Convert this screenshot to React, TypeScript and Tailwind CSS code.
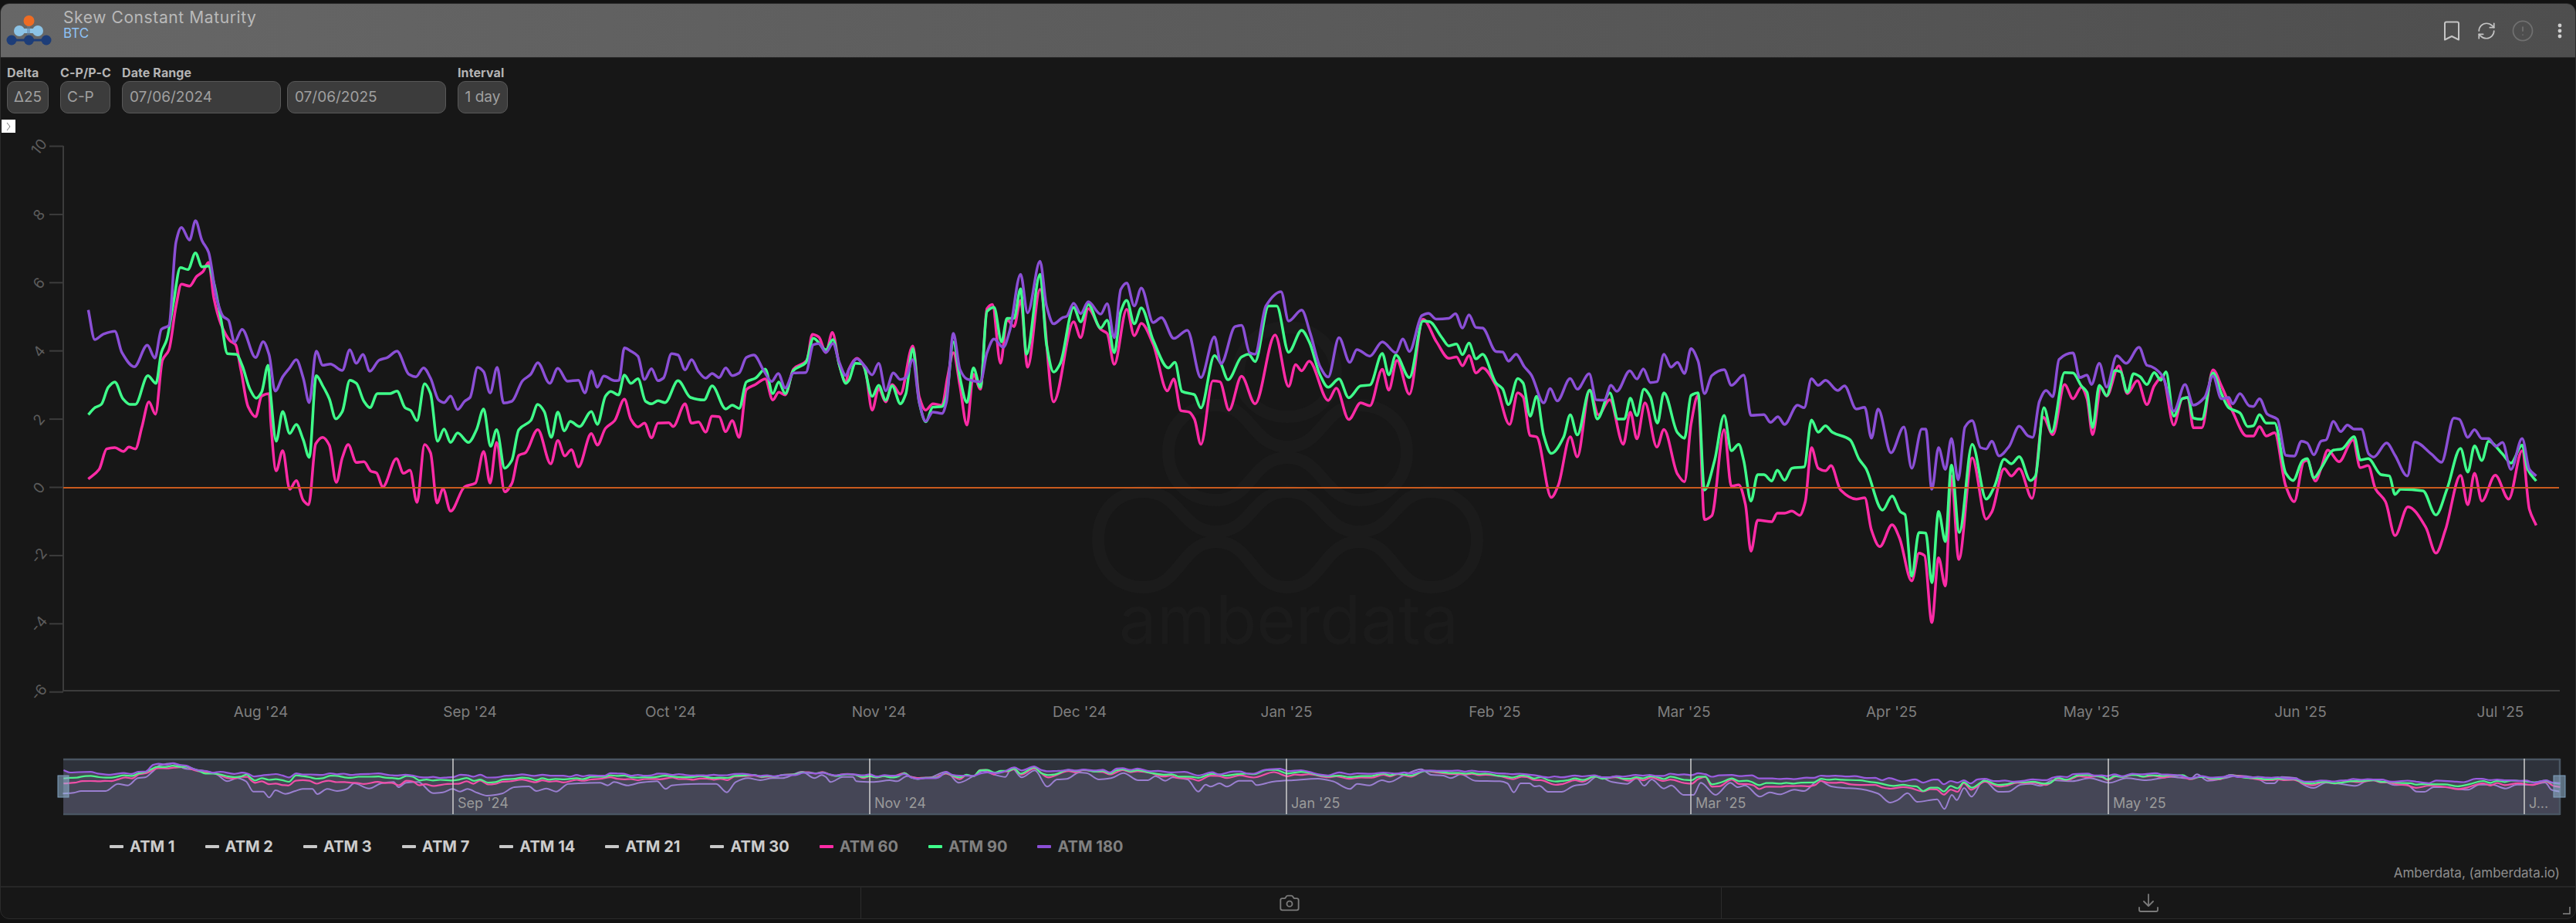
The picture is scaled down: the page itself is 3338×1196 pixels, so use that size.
import React from "react";
import { RefreshCw, CircleAlert, Camera } from "lucide-react";

type P = [number, number];

const Z5 = { x0: 0, sx: 1.425, y0: 180, sy: 3 };
const Z6 = { x0: 1100, sx: 1.425, y0: 300, sy: 2.8 };
const Z7 = { x0: 2200, sx: 1.378, y0: 400, sy: 3 };

const conv = (a: number[], z: { x0: number; sx: number; y0: number; sy: number }): P[] => {
  const out: P[] = [];
  for (let i = 0; i < a.length; i += 2) out.push([z.x0 + a[i] / z.sx, z.y0 + a[i + 1] / z.sy]);
  return out;
};

const join = (...parts: P[][]): P[] => {
  const out: P[] = [];
  parts.flat().forEach((p) => {
    if (!out.length || p[0] > out[out.length - 1][0] + 0.01) out.push(p);
  });
  return out;
};

const purple = join(
  conv([163,665,175,780,190,760,212,748,225,830,248,886,272,802,286,852,298,740,312,725,325,400,335,344,350,393,361,318,373,395,385,440,400,620,412,690,422,705,433,790,447,740,472,850,486,788,497,840,508,980,522,925,535,890,547,858,560,930,571,1025,584,825,596,880,610,875,632,900,646,820,658,872,670,838,683,903,700,860,715,850,733,825,755,915,768,925,782,890,795,930,810,1015,820,1025,832,1000,845,1052,858,1020,868,1005,882,888,893,905,905,988,918,888,930,1027,945,1020,965,940,980,915,993,870,1015,950,1030,892,1048,942,1068,938,1080,988,1092,902,1103,965,1115,922,1135,940,1143,938,1153,812,1165,825,1178,845,1190,935,1203,893,1215,940,1225,930,1240,835,1252,840,1265,898,1277,858,1290,905,1303,930,1315,912,1328,928,1340,890,1352,920,1365,910,1378,850,1392,840,1410,900,1425,943,1437,912,1450,968,1465,910,1488,908,1502,800,1512,796,1525,830,1538,795,1550,870,1562,920], Z5),
  conv([0,500,15,462,30,490,43,520,55,478,68,578,82,513,95,537,105,530,118,465,130,620,142,688,155,655,172,660,180,620,193,370,205,500,218,535,243,545,255,440,268,390,285,420,297,360,317,155,330,295,353,108,365,270,378,335,395,312,402,308,415,260,428,298,442,255,465,300,477,262,490,385,502,210,513,187,527,270,540,205,562,330,577,312,600,388,625,358,650,530,675,382,687,480,713,345,725,340,740,440,750,445,770,270,798,218,812,325,836,285,852,370,870,490,885,528,905,385,925,475,938,428,962,452,985,400,1010,440,1023,390,1035,435,1058,305,1070,297,1085,318,1108,315,1120,298,1133,350,1145,302,1158,348,1170,350,1195,435,1207,437,1218,470,1232,445,1247,490,1260,520,1283,622,1295,570,1308,615,1332,533,1345,572,1367,516,1380,610,1395,612,1407,558,1418,580,1442,505,1455,535,1467,498,1480,548,1492,545,1505,445,1518,492,1530,475,1543,515,1555,425,1568,470], Z6),
  conv([0,205,12,330,25,260,47,237,60,298,82,258,95,415,118,412,130,442,143,420,155,450,178,375,190,385,203,272,215,298,228,278,250,318,262,300,283,390,298,383,310,503,322,390,345,560,368,460,382,620,400,468,407,468,418,702,430,540,442,625,453,505,465,665,477,460,490,435,505,540,515,545,525,515,538,572,556,535,574,457,590,495,598,500,610,360,622,318,634,342,645,197,670,172,682,268,695,258,703,295,717,212,730,305,748,183,765,212,788,150,802,220,810,225,830,262,850,398,870,295,885,375,905,345,920,262,935,350,948,345,955,370,968,330,985,378,992,380,1003,350,1017,410,1035,430,1050,570,1065,573,1078,515,1088,522,1100,568,1113,515,1122,510,1135,438,1148,478,1160,452,1172,468,1185,468,1198,565,1207,577,1230,522,1245,570,1267,650,1280,518,1310,565,1328,597,1350,425,1360,430,1375,500,1387,470,1400,505,1412,505,1425,535,1437,520,1452,625,1472,505,1485,625,1497,650], Z7)
);

const green = join(
  conv([163,1072,175,1045,187,1032,200,965,212,945,227,1010,240,1032,250,1032,273,920,288,950,298,830,308,780,320,640,333,500,347,508,361,443,373,497,385,494,395,560,408,700,420,835,437,838,447,880,462,975,473,1008,483,985,495,880,500,1000,510,1175,522,1060,535,1145,547,1110,560,1170,571,1238,584,920,596,960,608,1010,620,1088,632,1060,646,938,658,950,672,1020,683,1045,697,990,720,990,733,980,748,1045,758,1055,770,1095,784,952,795,990,808,1175,820,1128,832,1180,845,1143,865,1180,880,1130,893,1050,906,1195,917,1130,932,1280,945,1250,958,1130,980,1095,993,1032,1005,1060,1018,1160,1030,1062,1042,1135,1053,1098,1070,1118,1092,1060,1103,1110,1118,1000,1128,982,1142,995,1153,918,1165,950,1178,932,1192,1020,1203,1030,1215,1018,1228,1025,1252,940,1275,1005,1300,1015,1315,960,1340,1050,1352,1035,1365,1048,1378,945,1395,930,1413,895,1427,990,1438,945,1450,990,1465,900,1488,870,1502,775,1525,820,1538,780,1550,880,1562,950], Z5),
  conv([0,540,12,478,25,480,43,598,55,558,68,612,80,560,95,625,105,590,118,425,130,620,142,690,155,637,172,635,180,600,193,400,205,530,218,620,230,495,243,565,255,290,268,275,282,400,292,315,305,315,317,208,328,445,353,155,365,410,378,510,390,480,415,275,428,328,442,265,465,350,477,322,490,440,502,290,513,250,527,335,540,277,562,395,590,495,602,475,615,580,638,592,650,640,675,450,687,480,700,538,725,455,738,445,750,472,775,270,790,270,812,438,836,358,850,400,870,520,885,565,905,535,923,603,945,560,962,557,985,442,997,520,1010,448,1035,530,1060,325,1072,327,1095,385,1108,415,1122,408,1133,447,1145,405,1158,462,1170,445,1195,550,1207,570,1218,628,1235,533,1245,550,1258,670,1270,598,1283,740,1297,805,1320,745,1332,665,1345,738,1368,575,1382,680,1405,585,1420,680,1432,680,1443,605,1455,668,1468,572,1480,600,1493,695,1505,585,1530,730,1543,750,1555,595,1568,585], Z6),
  conv([0,330,12,705,30,590,47,415,60,552,73,527,82,590,95,748,107,645,118,645,132,670,142,628,155,667,168,620,190,615,203,433,215,480,228,455,240,480,272,510,288,585,300,620,330,783,347,728,362,790,370,800,382,1040,395,870,407,872,418,1065,430,788,442,905,453,608,467,870,490,527,515,740,530,690,547,585,560,603,574,575,594,668,603,650,618,385,632,480,655,248,670,250,685,300,695,325,705,462,717,298,730,338,745,240,755,245,767,325,778,253,790,265,802,295,815,248,827,278,836,245,850,418,865,350,875,345,885,425,900,430,920,250,935,330,948,385,968,405,982,458,992,455,1003,412,1015,445,1030,445,1050,640,1063,668,1080,590,1088,583,1100,658,1113,620,1135,550,1150,545,1172,497,1183,588,1197,583,1220,645,1235,650,1245,722,1255,702,1295,708,1318,802,1338,700,1362,543,1375,635,1387,533,1400,590,1412,515,1437,565,1452,600,1472,530,1482,625,1497,670], Z7)
);

const pink = join(
  conv([163,1322,183,1285,197,1205,212,1200,228,1215,238,1198,250,1205,262,1120,275,1022,287,1070,300,860,312,820,325,650,335,565,350,572,363,535,375,515,385,480,395,620,408,720,425,785,435,800,445,900,458,1040,472,1080,483,1000,497,990,500,1100,510,1290,522,1212,535,1362,547,1328,560,1405,570,1422,583,1185,596,1160,608,1190,621,1335,632,1240,643,1188,658,1258,672,1255,685,1292,695,1298,707,1352,732,1243,745,1300,757,1288,770,1413,784,1188,795,1220,807,1415,818,1360,832,1447,858,1352,878,1338,893,1215,905,1338,917,1180,932,1372,945,1340,958,1230,970,1220,993,1130,1017,1263,1030,1172,1043,1232,1055,1208,1068,1275,1092,1145,1103,1190,1118,1125,1135,1095,1153,1012,1165,1090,1178,1120,1190,1105,1203,1162,1215,1105,1235,1103,1243,1118,1265,1030,1277,1105,1290,1100,1303,1140,1315,1078,1328,1080,1340,1138,1352,1095,1365,1160,1378,975,1395,955,1413,933,1427,1015,1438,985,1450,995,1465,895,1490,860,1500,760,1512,770,1525,830,1537,752,1550,880,1562,945], Z5),
  conv([0,500,15,460,30,500,43,648,55,570,68,618,80,555,95,590,118,415,130,600,142,648,155,625,172,630,182,530,193,440,205,560,218,702,230,518,243,572,255,280,265,265,280,478,292,320,305,345,317,250,330,492,353,210,378,618,415,328,428,385,442,280,465,355,477,370,490,482,513,282,527,378,540,333,562,410,588,578,600,535,613,650,628,655,638,680,650,772,672,542,685,545,702,648,725,525,750,625,787,375,812,562,825,483,836,505,850,470,885,613,900,568,923,682,945,622,962,632,985,500,997,575,1012,468,1035,590,1060,318,1085,400,1108,460,1122,455,1133,487,1145,450,1158,513,1170,495,1195,560,1220,700,1235,585,1245,600,1258,740,1270,745,1297,965,1310,920,1332,745,1345,818,1368,575,1384,665,1405,610,1430,772,1443,655,1455,752,1470,622,1492,782,1505,718,1530,880,1543,908,1555,700,1568,595], Z6),
  conv([0,575,12,820,25,805,47,470,60,690,73,685,85,760,95,943,107,822,132,828,142,795,155,795,168,787,182,803,192,750,203,540,215,620,228,630,238,610,255,705,283,740,298,735,310,860,325,925,347,840,360,890,382,1058,395,950,405,960,418,1220,430,968,442,1078,453,650,466,975,490,580,515,818,525,790,547,622,560,650,574,622,597,737,617,422,634,490,655,295,670,350,685,305,695,350,705,490,720,305,730,340,752,222,767,330,785,280,802,373,815,300,830,265,850,452,865,350,875,345,885,463,900,463,920,238,935,300,955,400,980,495,992,495,1003,458,1015,495,1030,482,1050,690,1065,750,1082,595,1088,590,1103,670,1113,620,1125,550,1145,595,1170,510,1183,618,1197,610,1210,700,1228,750,1245,882,1268,770,1300,850,1318,950,1335,860,1362,648,1375,762,1387,640,1400,748,1424,647,1448,740,1472,552,1485,780,1497,842], Z7)
);

const pale = join(
  conv([18,160,40,157,55,150,105,150,130,122,150,128,170,100,185,97,200,75,215,50,240,42,265,62,300,70,330,85,352,112,372,100,390,112,405,152,425,152,437,175,450,147,470,161,490,150,505,142,525,142,535,162,555,142,575,150,595,142,610,120,640,140,665,120,690,115,700,135,715,118,740,115,770,158,790,155,810,142,825,152,840,142,860,157,880,168,910,160,935,135,965,132,980,150,1000,140,1020,152,1045,122,1110,118,1125,128,1138,115,1165,128,1190,118,1225,112,1243,142,1255,128,1310,122,1345,122,1367,155,1385,115,1410,100,1435,108,1460,100,1480,100,1520,75,1545,100,1560,88], { x0: 70, sx: 1.568, y0: 975, sy: 3 }),
  conv([0,95,10,115,35,95,55,95,62,112,95,115,130,108,145,112,165,92,190,100,210,98,245,75,270,118,300,92,320,72,340,85,365,95,378,60,398,97,425,70,450,133,470,105,490,103,515,78,530,80,555,105,580,100,605,80,635,108,655,108,670,92,690,110,705,97,735,105,757,152,772,125,782,133,800,120,815,133,840,110,865,110,875,127,910,113,950,108,1000,102,1030,112,1065,142,1080,122,1105,128,1130,108,1145,115,1175,88,1210,65,1230,87,1255,90,1270,100,1290,85,1320,110,1370,112,1385,120,1398,155,1412,120,1430,120,1440,132,1450,130,1468,153,1495,153,1520,130,1545,122], { x0: 1070, sx: 1.568, y0: 975, sy: 3 }),
  conv([0,92,30,115,60,122,80,100,95,130,110,105,135,140,150,128,175,165,195,165,210,118,240,165,270,118,285,135,300,128,330,172,350,155,370,163,400,145,420,150,450,108,475,132,500,138,525,140,570,160,595,195,610,185,630,158,650,192,690,182,705,220,720,165,730,185,745,138,760,172,785,108,815,153,835,152,860,125,880,122,900,130,925,108,965,112,1000,100,1040,118,1075,100,1115,108,1165,95,1205,102,1218,85,1240,110,1275,100,1300,90,1340,100,1360,120,1375,120,1390,95,1420,100,1430,120,1455,138,1480,118,1510,122,1540,130], { x0: 2070, sx: 1.568, y0: 975, sy: 3 }),
  conv([910,152,960,160,990,172,1030,170,1060,197,1085,198,1115,180,1150,180,1200,188,1225,190,1260,170,1300,170,1345,185,1380,170,1430,170,1470,162,1490,190,1515,197], { x0: 2700, sx: 2.458, y0: 960, sy: 3 })
);

const monotone = (pts: P[]): string => {
  const n = pts.length;
  const dx: number[] = [];
  const m: number[] = [];
  for (let i = 0; i < n - 1; i++) {
    dx[i] = pts[i + 1][0] - pts[i][0];
    m[i] = (pts[i + 1][1] - pts[i][1]) / dx[i];
  }
  const t: number[] = [m[0]];
  for (let i = 1; i < n - 1; i++) {
    if (m[i - 1] * m[i] <= 0) t[i] = 0;
    else {
      const w = dx[i - 1] + dx[i];
      t[i] = (3 * w) / ((w + dx[i]) / m[i - 1] + (w + dx[i - 1]) / m[i]);
    }
  }
  t[n - 1] = m[n - 2];
  let d = `M${pts[0][0].toFixed(1)},${pts[0][1].toFixed(1)}`;
  for (let i = 0; i < n - 1; i++) {
    const h = dx[i] / 3;
    d += `C${(pts[i][0] + h).toFixed(1)},${(pts[i][1] + t[i] * h).toFixed(1)} ${(pts[i + 1][0] - h).toFixed(1)},${(pts[i + 1][1] - t[i + 1] * h).toFixed(1)} ${pts[i + 1][0].toFixed(1)},${pts[i + 1][1].toFixed(1)}`;
  }
  return d;
};

const toNav = (pts: P[]): P[] =>
  pts.map(([x, y]) => [82 + ((x - 114) * (3317 - 82)) / (3286 - 114), 1016 - (631.5 - y) * 0.0783] as P);

const navPurple = toNav(purple);
const areaPath = `${monotone(navPurple)}L3317,1056L82,1056Z`;

const yTicks = [10, 8, 6, 4, 2, 0, -2, -4, -6];
const tickY = (v: number) => 631.5 - v * 44.2;
const months: [string, number][] = [
  ["Aug '24", 338], ["Sep '24", 609], ["Oct '24", 869], ["Nov '24", 1139], ["Dec '24", 1399], ["Jan '25", 1667],
  ["Feb '25", 1937], ["Mar '25", 2182], ["Apr '25", 2451], ["May '25", 2710], ["Jun '25", 2981], ["Jul '25", 3240],
];
const navTicks: [string, number][] = [
  ["Sep '24", 587], ["Nov '24", 1127], ["Jan '25", 1667], ["Mar '25", 2191], ["May '25", 2732], ["J...", 3271],
];
const legend: [string, string, string][] = [
  ["ATM 1", "bg-[#c8c8c8]", "text-[#cccccc]"],
  ["ATM 2", "bg-[#c8c8c8]", "text-[#cccccc]"],
  ["ATM 3", "bg-[#c8c8c8]", "text-[#cccccc]"],
  ["ATM 7", "bg-[#c8c8c8]", "text-[#cccccc]"],
  ["ATM 14", "bg-[#c8c8c8]", "text-[#cccccc]"],
  ["ATM 21", "bg-[#c8c8c8]", "text-[#cccccc]"],
  ["ATM 30", "bg-[#c8c8c8]", "text-[#cccccc]"],
  ["ATM 60", "bg-[#ff2ba6]", "text-[#808080]"],
  ["ATM 90", "bg-[#3fff8a]", "text-[#808080]"],
  ["ATM 180", "bg-[#8b4fd6]", "text-[#808080]"],
];

const Field = ({ children, w, cls = "" }: { children: React.ReactNode; w: string; cls?: string }) => (
  <div className={`flex h-[42px] items-center rounded-[10px] border border-[#585858] bg-[#3c3c3c] text-[19px] text-[#a0a0a0] ${w} ${cls}`}>
    {children}
  </div>
);

const Label = ({ children }: { children: React.ReactNode }) => (
  <div className="h-[18px] whitespace-nowrap text-[16px] font-bold leading-[15px] tracking-[0.1px] text-[#b4b4b4]">{children}</div>
);

export default function App() {
  return (
    <div className="h-[1196px] w-[3338px] overflow-hidden bg-[#121212] pb-[5px] pt-[4px] font-[Inter,sans-serif]">
      <div className="flex h-full flex-col overflow-hidden rounded-[12px] border border-[#2b2b2b] bg-[#171717]">
        <header className="flex h-[70px] shrink-0 items-center border-b border-[#2a2a2a] bg-gradient-to-r from-[#676767] to-[#4e4e4e] pl-[7px] pr-[17px]">
          <svg width="60" height="42" viewBox="8 19 60 42" className="shrink-0">
            <path d="M25 40H49" stroke="#8cc3e6" strokeWidth="6" />
            <path d="M15 52H60" stroke="#1d3d78" strokeWidth="3" />
            <path d="M37 27L37 50" stroke="#5f7f9f" strokeWidth="4" opacity="0.5" />
            <circle cx="15" cy="52" r="6.5" fill="#1d3d78" />
            <circle cx="37.5" cy="52" r="6.5" fill="#1d3d78" />
            <circle cx="60" cy="52" r="6.5" fill="#1d3d78" />
            <circle cx="25" cy="40" r="7" fill="#8cc3e6" />
            <circle cx="49" cy="40" r="7" fill="#8cc3e6" />
            <circle cx="37.5" cy="27" r="7" fill="#ee6c24" />
          </svg>
          <div className="mb-[17px] ml-[14px] flex flex-col">
            <div className="text-[21px] leading-[24px] tracking-[0.6px] text-[#b9b9b9]">Skew Constant Maturity</div>
            <div className="text-[17px] leading-[16px] text-[#8ec2f5]">BTC</div>
          </div>
          <div className="ml-auto flex items-center">
            <svg width="20" height="26" viewBox="0 0 20 26" fill="none" stroke="#c4c4c4" strokeWidth="2" strokeLinejoin="round">
              <path d="M1 3.5C1 2.5 2 1.5 3 1.5H17C18 1.5 19 2.5 19 3.5V24.5L10 20L1 24.5Z" />
            </svg>
            <RefreshCw className="ml-[22px] h-[26px] w-[26px] text-[#c4c4c4]" strokeWidth={1.6} />
            <CircleAlert className="ml-[19px] h-[30px] w-[30px] text-[#707070]" strokeWidth={1.4} />
            <svg width="6" height="20" viewBox="0 0 6 20" className="ml-[30px]" fill="#cfcfcf">
              <circle cx="3" cy="3" r="2.4" />
              <circle cx="3" cy="10" r="2.4" />
              <circle cx="3" cy="17" r="2.4" />
            </svg>
          </div>
        </header>

        <div className="flex shrink-0 gap-[15px] pl-[8px] pt-[12px]">
          <div className="w-[54px]">
            <Label>Delta</Label>
            <Field w="w-[54px]" cls="justify-center">Δ25</Field>
          </div>
          <div className="w-[65px]">
            <Label>C-P/P-C</Label>
            <Field w="w-[65px]" cls="pl-[8px]">C-P</Field>
          </div>
          <div className="w-[420px]">
            <Label>Date Range</Label>
            <div className="flex gap-[8px]">
              <Field w="w-[206px]" cls="pl-[9px]">07/06/2024</Field>
              <Field w="w-[206px]" cls="pl-[9px]">07/06/2025</Field>
            </div>
          </div>
          <div className="w-[65px]">
            <Label>Interval</Label>
            <Field w="w-[65px]" cls="justify-center">1 day</Field>
          </div>
        </div>

        <button className="ml-[1px] mt-[8px] flex h-[17px] w-[18px] shrink-0 items-center justify-center bg-white">
          <svg width="8" height="12" viewBox="0 0 8 12" fill="none" stroke="#777" strokeWidth="1">
            <path d="M2 1L6 6L2 11" />
          </svg>
        </button>

        <svg width="3336" height="888" viewBox="1 178 3336 888" className="mt-[6px] block shrink-0">
          <g fill="none" stroke="#1b1b1b" strokeWidth="16">
            <ellipse cx="1668" cy="482" rx="63" ry="58" />
            <path d="M1514,586C1514,550 1540,525 1576,525C1622,525 1622,579 1668,579C1714,579 1714,525 1761,525C1797,525 1823,550 1823,586C1823,622 1797,648 1761,648C1714,648 1714,593 1668,593C1622,593 1622,648 1576,648C1540,648 1514,622 1514,586Z" />
            <path d="M1423,699C1423,660 1450,637 1482,637C1530,637 1530,689 1576,689C1622,689 1622,637 1668,637C1714,637 1714,689 1761,689C1807,689 1807,637 1854,637C1886,637 1914,660 1914,699C1914,738 1886,761 1854,761C1807,761 1807,702 1761,702C1714,702 1714,761 1668,761C1622,761 1622,702 1576,702C1530,702 1530,761 1482,761C1450,761 1423,738 1423,699Z" />
          </g>
          <text x="1670" y="834" textAnchor="middle" fontSize="87" fill="#1b1b1b" fontFamily="Inter, sans-serif">amberdata</text>

          <path d="M82,189V895H3317" fill="none" stroke="#3c3c3c" strokeWidth="2" />
          {yTicks.map((v) => (
            <g key={v}>
              <line x1="64" x2="82" y1={tickY(v)} y2={tickY(v)} stroke="#3c3c3c" strokeWidth="2" />
              <text
                x="51"
                y={tickY(v) + 7}
                textAnchor="middle"
                fontSize="19"
                fill="#5c5c5c"
                fontFamily="Inter, sans-serif"
                transform={`rotate(-50 51 ${tickY(v) + 1})`}
              >
                {String(v)}
              </text>
            </g>
          ))}
          {months.map(([m, x]) => (
            <text key={m} x={x} y="929" textAnchor="middle" fontSize="19" fill="#7e7e7e" fontFamily="Inter, sans-serif">
              {m}
            </text>
          ))}

          <path d={monotone(pink)} fill="none" stroke="#ff2ba6" strokeWidth="3.5" strokeLinejoin="round" />
          <path d={monotone(green)} fill="none" stroke="#3fff8a" strokeWidth="3.5" strokeLinejoin="round" />
          <path d={monotone(purple)} fill="none" stroke="#8b4fd6" strokeWidth="3.5" strokeLinejoin="round" />
          <line x1="82" x2="3316" y1="632" y2="632" stroke="#c95a1e" strokeWidth="2.2" />

          <rect x="82" y="983" width="3235" height="73" fill="#2e323b" />
          <path d={areaPath} fill="#454656" />
          <path d="M82,984H3317M82,1055H3317M3317,983V1056" fill="none" stroke="#4a5662" strokeWidth="2.5" />
          <path d={monotone(pale)} fill="none" stroke="#9a7fd0" strokeWidth="2" />
          <path d={monotone(toNav(pink))} fill="none" stroke="#f04fa8" strokeWidth="2.2" />
          <path d={monotone(toNav(green))} fill="none" stroke="#4ff28a" strokeWidth="2.2" />
          <path d={monotone(navPurple)} fill="none" stroke="#9a5ce0" strokeWidth="2.2" />
          {navTicks.map(([t, x]) => (
            <g key={t}>
              <line x1={x} x2={x} y1="983" y2="1055" stroke="#cfcfcf" strokeWidth="1.5" />
              <text x={x + 6} y="1047" fontSize="18" fill="#9a9a9a" fontFamily="Inter, sans-serif">
                {t}
              </text>
            </g>
          ))}
          <rect x="75" y="1005" width="14" height="28" fill="#93b7d6" fillOpacity="0.55" stroke="#7fa0bd" />
          <rect x="3309" y="1005" width="15" height="28" fill="#93b7d6" fillOpacity="0.55" stroke="#7fa0bd" />
        </svg>

        <div className="flex h-[50px] shrink-0 items-center gap-[39px] pl-[141px] pt-[12px]">
          {legend.map(([n, dash, txt]) => (
            <div key={n} className="flex items-center gap-[8px]">
              <span className={`h-[4px] w-[18px] rounded-[1px] ${dash}`} />
              <span className={`text-[20px] font-bold leading-[24px] ${txt}`}>{n}</span>
            </div>
          ))}
        </div>

        <div className="flex h-[32px] shrink-0 items-center justify-end pr-[20px] text-[17px] text-[#8e8e8e]">
          Amberdata, (amberdata.io)
        </div>

        <footer className="relative grid flex-1 grid-cols-[1115px_1115px_1fr] border-t-2 border-[#262626]">
          <div className="border-r border-[#2c2c2c]" />
          <div className="flex items-center justify-center border-r border-[#2c2c2c] pr-[5px]">
            <Camera className="h-[28px] w-[28px] text-[#7a7a7a]" strokeWidth={1.6} />
          </div>
          <div className="flex items-center justify-center">
            <svg width="26" height="24" viewBox="0 0 26 24" fill="none" stroke="#7a7a7a" strokeWidth="1.8" strokeLinecap="round" strokeLinejoin="round">
              <path d="M13 1V16M7 10L13 16L19 10M1 18V21C1 22 2 23 3 23H23C24 23 25 22 25 21V18" />
            </svg>
          </div>
          <svg width="11" height="11" viewBox="0 0 11 11" className="absolute bottom-[5px] right-[6px]" fill="none" stroke="#888" strokeWidth="1.5">
            <path d="M1 10H10V1" />
          </svg>
        </footer>
      </div>
    </div>
  );
}
